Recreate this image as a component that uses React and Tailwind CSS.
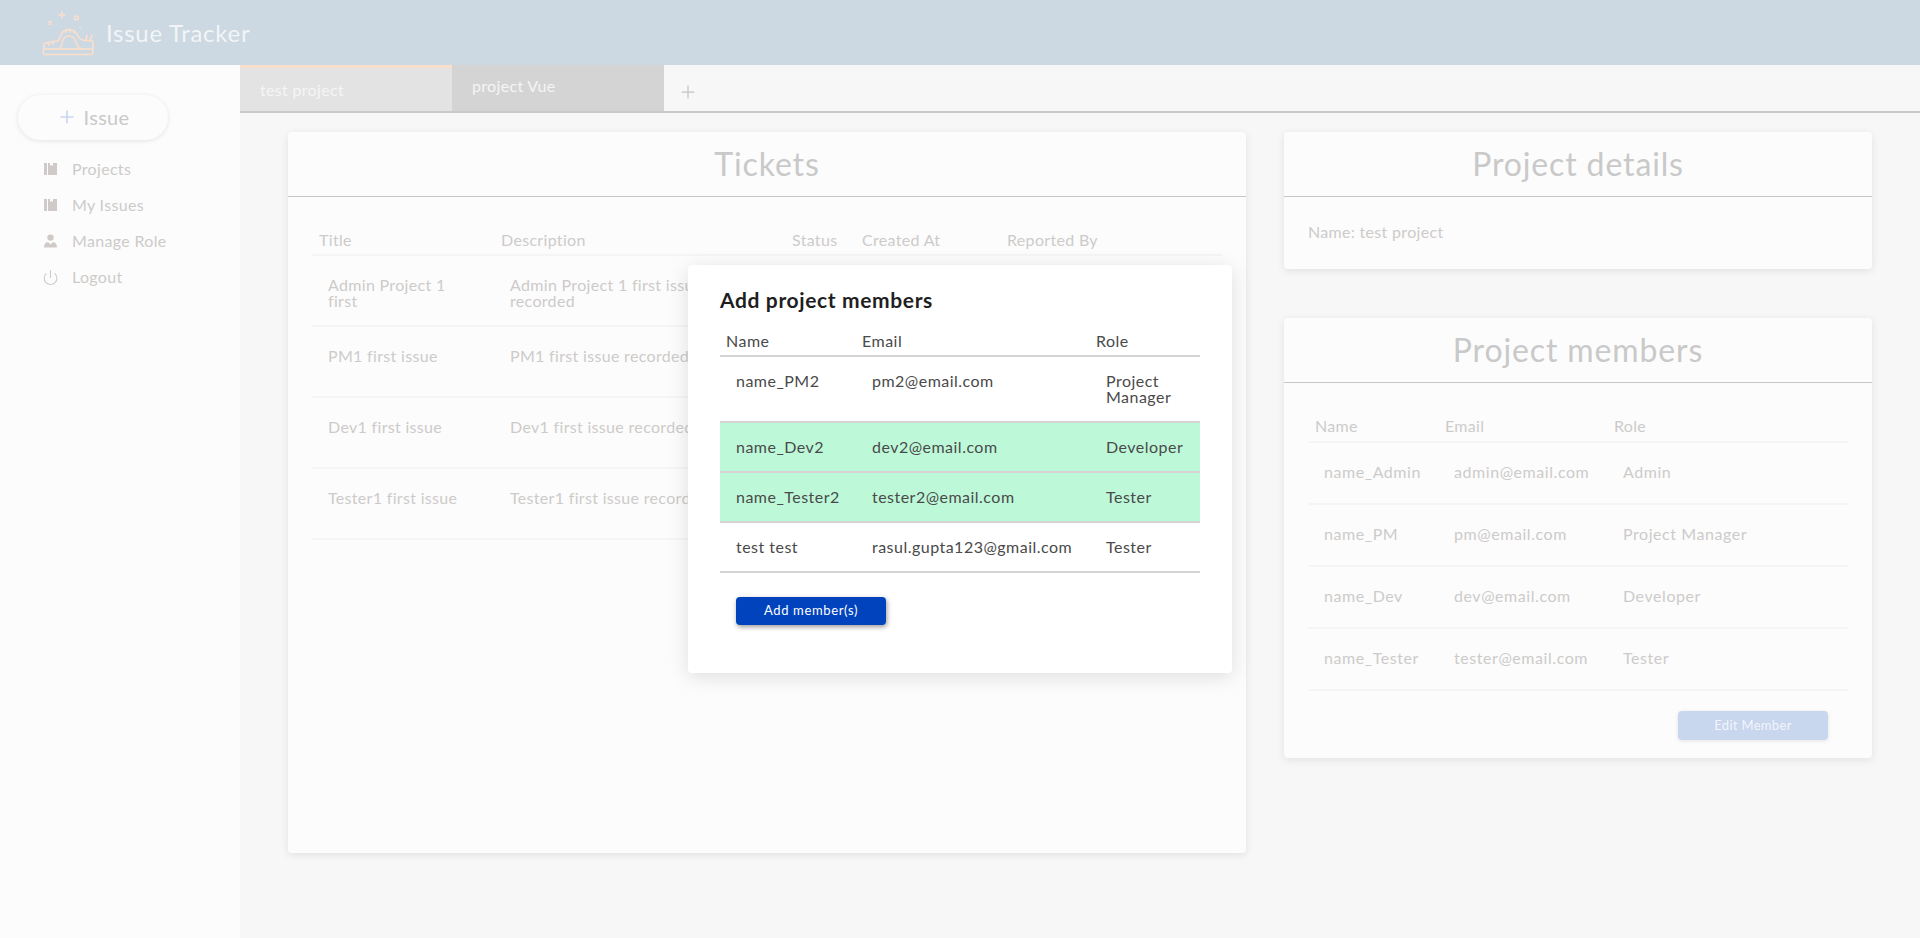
import { Plus, Power } from "lucide-react";

const tickets = [
  { title: "Admin Project 1 first", desc: "Admin Project 1 first issue recorded" },
  { title: "PM1 first issue", desc: "PM1 first issue recorded" },
  { title: "Dev1 first issue", desc: "Dev1 first issue recorded" },
  { title: "Tester1 first issue", desc: "Tester1 first issue recorded" },
];

const members = [
  { name: "name_Admin", email: "admin@email.com", role: "Admin" },
  { name: "name_PM", email: "pm@email.com", role: "Project Manager" },
  { name: "name_Dev", email: "dev@email.com", role: "Developer" },
  { name: "name_Tester", email: "tester@email.com", role: "Tester" },
];

const candidates = [
  { name: "name_PM2", email: "pm2@email.com", role: "Project Manager" },
  { name: "name_Dev2", email: "dev2@email.com", role: "Developer", picked: true },
  { name: "name_Tester2", email: "tester2@email.com", role: "Tester", picked: true },
  { name: "test test", email: "rasul.gupta123@gmail.com", role: "Tester" },
];

const BookIcon = () => (
  <svg width="13" height="14" viewBox="0 0 13 14" fill="#cfcac8">
    <path d="M0 1h3v12H0z" />
    <path d="M4 1h2v3l1.5-1L9 4V1h4v12H4z" />
  </svg>
);

const UserIcon = () => (
  <svg width="13" height="14" viewBox="0 0 13 14" fill="#cfcac8">
    <circle cx="6.5" cy="3.6" r="3.2" />
    <path d="M0 13.5c0-3 1.5-5 4-5.4l2.5 2.4L9 8.1c2.500.4 4 2.400 4 5.400z" />
  </svg>
);

const Logo = () => (
  <svg width="52" height="46" viewBox="0 0 52 46" fill="none" stroke="#fbdfca" strokeWidth="1.5" strokeLinecap="round" strokeLinejoin="round">
    <path d="M6.500 11.500l3 3M9.500 11.500l-3 3" />
    <path d="M20 2v2M20 6v2M17 5h2M21 5h2" />
    <circle cx="34.500" cy="8" r="2" />
    <path d="M38 17.500h.5" />
    <rect x="1" y="39" width="50" height="5.500" rx="2.500" />
    <path d="M2 39v-4.500c0-.8.500-1.300 1.300-1.500L15 31c3-1 3-3.500 4-6 1.500-4 4.500-5.500 8-5.500 4.500 0 7 2.500 9 6.500 1.500 3 3 4 6 4.500h7c1.500 0 2 1 2 2.500V39" />
    <path d="M15 39c3 0 5-3 5.500-7 .5-3.500 3-6 6.500-6s6 2.500 7 6c1 4 3.500 7 7 7" />
    <path d="M7 33v2.500M11 32v2.500M24 20v2.500M28 19.500v2.500M32 20.500v2.500M44 30l1-5M48 31l2-6" />
  </svg>
);

const Card = ({ title, className, children }) => (
  <section className={`rounded bg-[#fcfcfc] shadow-[0_2px_8px_rgba(0,0,0,0.09)] ${className}`}>
    <h2 className="flex h-[65px] items-center justify-center border-b border-[#c6c6c6] text-[32px] tracking-[0.027em] text-[#c9c9c9]">
      {title}
    </h2>
    {children}
  </section>
);

export default function App() {
  return (
    <div className="relative flex h-[938px] flex-col overflow-hidden bg-[#f7f7f7] font-['Lato',sans-serif] tracking-[0.02em] text-[#cdcbca]">
      <header className="flex h-[65px] shrink-0 items-center bg-[#ccd8e2] pl-[42px]">
        <Logo />
        <span className="ml-3 text-[24px] tracking-[0.03em] text-[#f2f5f7]">Issue Tracker</span>
      </header>

      <div className="flex flex-1">
        <aside className="w-[240px] shrink-0 bg-[#fcfcfc] pl-[18px] pt-[30px]">
          <button className="flex h-[45px] w-[150px] items-center justify-center gap-[7px] rounded-full bg-[#fcfcfc] pb-[2px] text-[20px] text-[#c9c9c9] shadow-[0_1px_5px_rgba(0,0,0,0.1)]">
            <Plus size={20} color="#c8d6ee" strokeWidth={2} />
            Issue
          </button>
          <nav className="mt-[11px] pl-[26px] text-[16px]">
            <a className="flex h-[36px] items-center gap-[15px]"><BookIcon />Projects</a>
            <a className="flex h-[36px] items-center gap-[15px]"><BookIcon />My Issues</a>
            <a className="flex h-[36px] items-center gap-[15px]"><UserIcon />Manage Role</a>
            <a className="flex h-[36px] items-center gap-[15px]">
              <span className="flex w-[13px] justify-center"><Power className="shrink-0" size={17} color="#cfcac8" strokeWidth={1.5} /></span>
              Logout
            </a>
          </nav>
        </aside>

        <main className="flex-1">
          <div className="flex h-[48px] border-b-2 border-[#c9c9c9] text-[16px] text-[#f5f5f5]">
            <div className="flex w-[212px] items-center border-t-[3px] border-[#fbdfca] bg-[#e3e3e3] pl-[20px]">test project</div>
            <div className="flex w-[212px] items-center bg-[#d4d4d4] pb-1 pl-[20px]">project Vue</div>
            <div className="flex w-[48px] items-center justify-center pt-[7px]">
              <Plus size={20} color="#c4c4c4" strokeWidth={1.5} />
            </div>
          </div>

          <div className="flex items-start gap-[38px] pl-[48px] pt-[19px]">
            <Card title="Tickets" className="h-[721px] w-[958px]">
              <div className="px-[24px] pt-[35px]">
                <table className="w-[910px] table-fixed border-collapse text-left text-[16px] leading-[16px]">
                  <thead>
                    <tr className="border-b-2 border-[#f5f5f5]">
                      <th className="h-[23px] w-[182px] pl-[7px] align-top font-normal">Title</th>
                      <th className="h-[23px] w-[291px] pl-[7px] align-top font-normal">Description</th>
                      <th className="h-[23px] w-[70px] pl-[7px] align-top font-normal">Status</th>
                      <th className="h-[23px] w-[145px] pl-[7px] align-top font-normal">Created At</th>
                      <th className="h-[23px] w-[222px] pl-[7px] align-top font-normal">Reported By</th>
                    </tr>
                  </thead>
                  <tbody>
                    {tickets.map((t) => (
                      <tr key={t.title} className="h-[71px] border-b-2 border-[#f5f5f5]">
                        <td className="px-4 pb-[16px] pt-[21px] align-top">{t.title}</td>
                        <td className="px-4 pb-[16px] pt-[21px] align-top">{t.desc}</td>
                        <td />
                        <td />
                        <td />
                      </tr>
                    ))}
                  </tbody>
                </table>
              </div>
            </Card>

            <div className="flex w-[588px] flex-col gap-[49px]">
              <Card title="Project details" className="h-[137px]">
                <p className="pl-[24px] pt-[23px] text-[16px]">Name: test project</p>
              </Card>

              <Card title="Project members" className="h-[440px]">
                <div className="px-[24px] pt-[31px]">
                  <table className="w-[540px] table-fixed border-collapse text-left text-[16px]">
                    <thead>
                      <tr className="border-b-2 border-[#f5f5f5]">
                        <th className="h-[28px] w-[130px] pl-[7px] align-top font-normal">Name</th>
                        <th className="h-[28px] w-[169px] pl-[7px] align-top font-normal">Email</th>
                        <th className="h-[28px] pl-[7px] align-top font-normal">Role</th>
                      </tr>
                    </thead>
                    <tbody className="tracking-[0.035em]">
                      {members.map((m) => (
                        <tr key={m.name} className="h-[62px] border-b-2 border-[#f5f5f5]">
                          <td className="pb-[2px] pl-4">{m.name}</td>
                          <td className="pb-[2px] pl-4">{m.email}</td>
                          <td className="pb-[2px] pl-4">{m.role}</td>
                        </tr>
                      ))}
                    </tbody>
                  </table>
                  <div className="mt-[20px] flex justify-end pr-[20px]">
                    <button className="h-[29px] w-[150px] rounded bg-[#c8d6ee] text-[13px] text-[#f2f5fa] shadow-[0_1px_4px_rgba(0,0,0,0.1)]">
                      Edit Member
                    </button>
                  </div>
                </div>
              </Card>
            </div>
          </div>
        </main>
      </div>

      {/* Add members modal, sits over the dimmed page */}
      <div className="absolute left-[688px] top-[265px] h-[408px] w-[544px] rounded bg-white p-[32px] pt-[21px] tracking-[0.03em] text-[#4a4a4a] shadow-[0_4px_20px_rgba(0,0,0,0.12)]">
        <h3 className="text-[21px] font-bold leading-[28px] tracking-[0.03em] text-[#1f1f1f]">Add project members</h3>
        <table className="mt-[12px] w-[480px] table-fixed border-collapse text-left text-[16px] leading-[16px]">
          <thead>
            <tr className="border-b-2 border-[#d4d4d4]">
              <th className="h-[30px] w-[136px] pl-[6px] font-normal">Name</th>
              <th className="h-[30px] w-[234px] pl-[6px] font-normal">Email</th>
              <th className="h-[30px] pl-[6px] font-normal">Role</th>
            </tr>
          </thead>
          <tbody>
            {candidates.map((c) => (
              <tr key={c.name} className={`border-b-2 border-[#d4d4d4] ${c.picked ? "bg-[#bdf9d9]" : ""}`}>
                <td className="px-4 py-[16px] align-top">{c.name}</td>
                <td className="px-4 py-[16px] align-top">{c.email}</td>
                <td className="px-4 py-[16px] align-top">{c.role}</td>
              </tr>
            ))}
          </tbody>
        </table>
        <button className="ml-[16px] mt-[24px] h-[28px] w-[150px] rounded bg-[#0043bd] text-[13px] tracking-[0.05em] text-white shadow-[1px_2px_5px_rgba(0,0,0,0.4)]">
          Add member(s)
        </button>
      </div>
    </div>
  );
}
